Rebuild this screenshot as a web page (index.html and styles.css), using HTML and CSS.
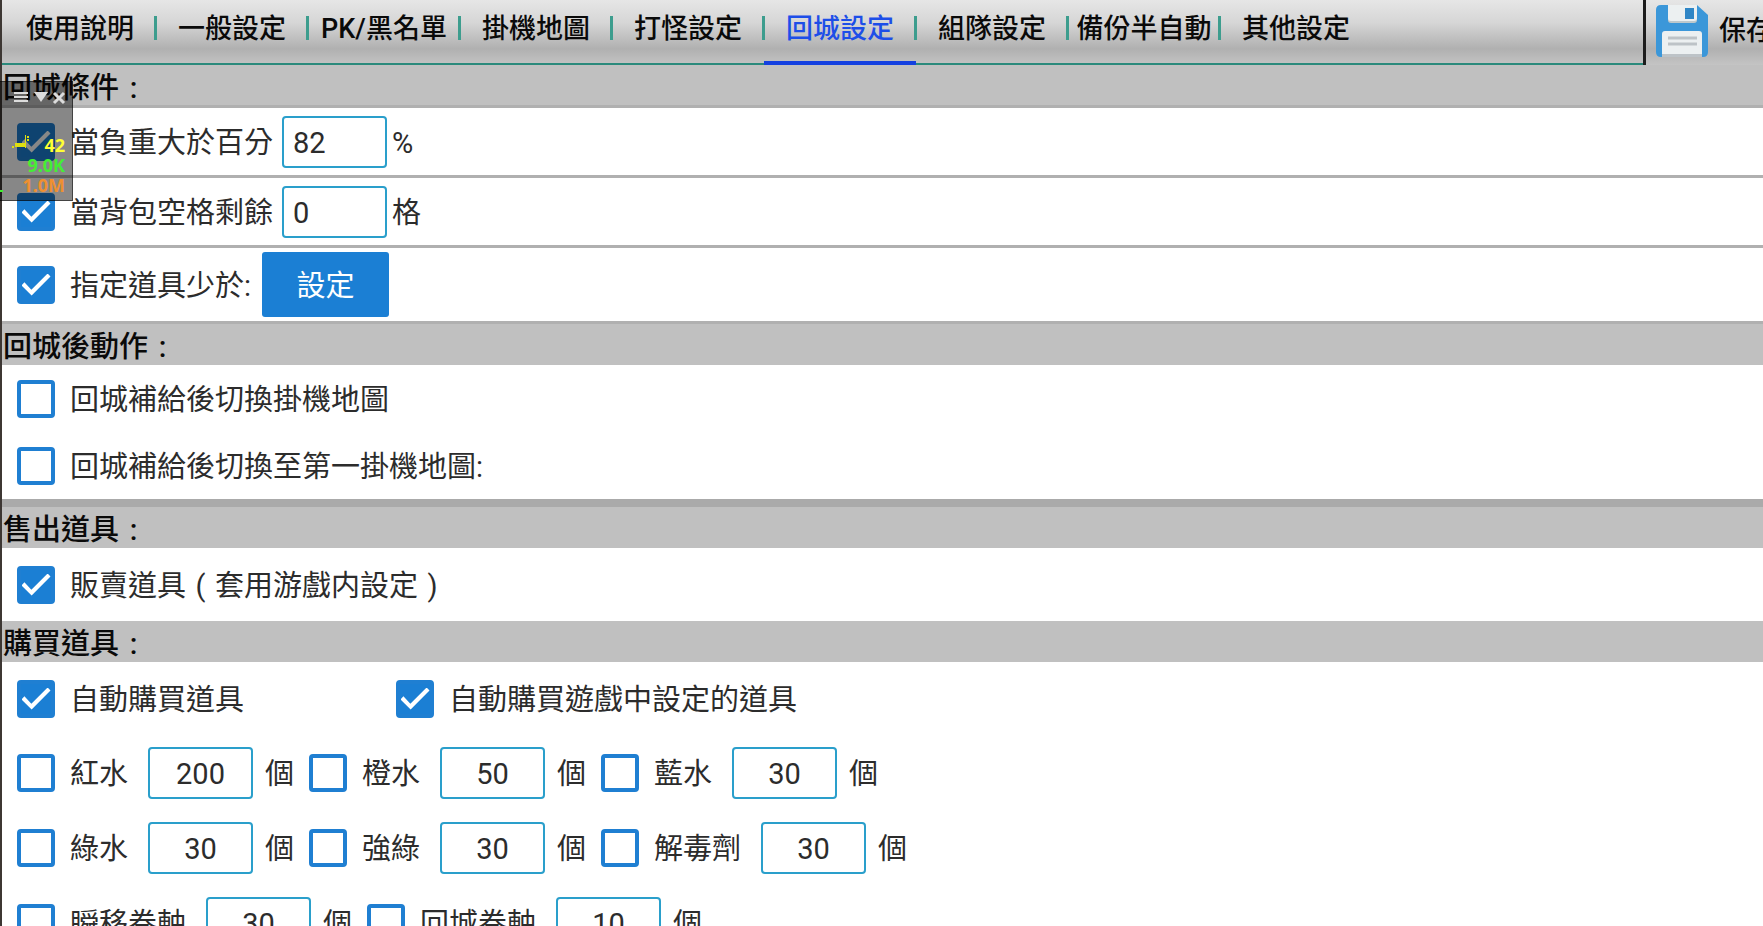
FILE: index.html
```html
<!DOCTYPE html>
<html lang="zh-Hant">
<head>
<meta charset="utf-8">
<title>回城設定</title>
<link rel="stylesheet" href="styles.css">
</head>
<body>
<div class="app">
  <header class="topbar">
    <nav class="tabs">
      <a class="tab" href="#help">使用說明</a>
      <a class="tab" href="#general">一般設定</a>
      <a class="tab" href="#pk">PK/黑名單</a>
      <a class="tab" href="#map">掛機地圖</a>
      <a class="tab" href="#fight">打怪設定</a>
      <a class="tab active" href="#town" aria-current="page">回城設定</a>
      <a class="tab" href="#team">組隊設定</a>
      <a class="tab" href="#backup">備份半自動</a>
      <a class="tab" href="#other">其他設定</a>
    </nav>
    <button class="save" type="button">
      <svg class="save-icon" viewBox="0 0 52 52" aria-hidden="true">
        <path d="M5 0H41L52 10V47Q52 52 47 52H5Q0 52 0 47V5Q0 0 5 0Z" fill="#3b97d9"/>
        <path d="M12 0H41V15Q41 18 38 18H15Q12 18 12 15Z" fill="#bdc8cc"/>
        <path d="M12 0H41V13Q41 16 38 16H15Q12 16 12 13Z" fill="#ecf0f1"/>
        <rect x="29" y="3" width="9" height="11" fill="#2f86c6"/>
        <path d="M6 52V29Q6 26 9 26H43Q46 26 46 29V52Z" fill="#ecf0f1"/>
        <rect x="6" y="49" width="40" height="3" fill="#bdc3c7"/>
        <path d="M12 33H41M12 39H41" stroke="#bdc3c7" stroke-width="3"/>
      </svg>
      <span>保存</span>
    </button>
  </header>

  <main>
    <h2 class="heading ruled">回城條件<span class="wide">:</span></h2>
    <div class="row ruled">
      <input class="check" type="checkbox" id="weight" checked>
      <label for="weight">當負重大於百分</label>
      <input class="field start" type="text" value="82" aria-label="負重百分比">
      <span class="suffix">%</span>
    </div>
    <div class="row ruled">
      <input class="check" type="checkbox" id="bag" checked>
      <label for="bag">當背包空格剩餘</label>
      <input class="field start" type="text" value="0" aria-label="背包空格">
      <span class="suffix">格</span>
    </div>
    <div class="row tall ruled">
      <input class="check" type="checkbox" id="items" checked>
      <label for="items">指定道具少於:</label>
      <button class="set" type="button">設定</button>
    </div>

    <h2 class="heading">回城後動作<span class="wide">:</span></h2>
    <div class="stack">
      <div class="row">
        <input class="check" type="checkbox" id="switch">
        <label for="switch">回城補給後切換掛機地圖</label>
      </div>
      <div class="row">
        <input class="check" type="checkbox" id="first">
        <label for="first">回城補給後切換至第一掛機地圖:</label>
      </div>
    </div>

    <h2 class="heading">售出道具<span class="wide">:</span></h2>
    <div class="row tall">
      <input class="check" type="checkbox" id="sell" checked>
      <label for="sell">販賣道具<span class="wide">(</span>套用游戲内設定<span class="wide">)</span></label>
    </div>

    <h2 class="heading">購買道具<span class="wide">:</span></h2>
    <div class="row buy-options">
      <div class="option">
        <input class="check" type="checkbox" id="auto" checked>
        <label for="auto">自動購買道具</label>
      </div>
      <div class="option">
        <input class="check" type="checkbox" id="autogame" checked>
        <label for="autogame">自動購買遊戲中設定的道具</label>
      </div>
    </div>
    <div class="row buy">
      <div class="item">
        <input class="check" type="checkbox" id="red"><label for="red">紅水</label>
        <input class="field" type="text" value="200" aria-label="紅水數量"><span>個</span>
      </div>
      <div class="item">
        <input class="check" type="checkbox" id="orange"><label for="orange">橙水</label>
        <input class="field" type="text" value="50" aria-label="橙水數量"><span>個</span>
      </div>
      <div class="item">
        <input class="check" type="checkbox" id="blue"><label for="blue">藍水</label>
        <input class="field" type="text" value="30" aria-label="藍水數量"><span>個</span>
      </div>
    </div>
    <div class="row buy">
      <div class="item">
        <input class="check" type="checkbox" id="green"><label for="green">綠水</label>
        <input class="field" type="text" value="30" aria-label="綠水數量"><span>個</span>
      </div>
      <div class="item">
        <input class="check" type="checkbox" id="strong"><label for="strong">強綠</label>
        <input class="field" type="text" value="30" aria-label="強綠數量"><span>個</span>
      </div>
      <div class="item">
        <input class="check" type="checkbox" id="antidote"><label for="antidote">解毒劑</label>
        <input class="field" type="text" value="30" aria-label="解毒劑數量"><span>個</span>
      </div>
    </div>
    <div class="row buy">
      <div class="item">
        <input class="check" type="checkbox" id="teleport"><label for="teleport">瞬移卷軸</label>
        <input class="field" type="text" value="30" aria-label="瞬移卷軸數量"><span>個</span>
      </div>
      <div class="item">
        <input class="check" type="checkbox" id="return"><label for="return">回城卷軸</label>
        <input class="field" type="text" value="10" aria-label="回城卷軸數量"><span>個</span>
      </div>
    </div>
  </main>
</div>

<aside class="monitor">
  <svg class="monitor-icons" viewBox="0 0 72 24" aria-hidden="true">
    <path d="M14 11H28M14 15H28M14 19H28" stroke="#dcdcdc" stroke-width="2"/>
    <path d="M34 10H48L41 20Z" fill="#dcdcdc"/>
    <path d="M54 11L64 21M64 11L54 21" stroke="#dcdcdc" stroke-width="3"/>
  </svg>
  <div class="stat fps">
    <svg class="spark" viewBox="0 0 18 14" aria-hidden="true">
      <path d="M0 11H2V13H0ZM3 8H13V12H3ZM13 0H14V13H13ZM15 1H17V3H15ZM15 4H17V6H15Z" fill="#dede10"/>
    </svg>
    <span>42</span>
  </div>
  <div class="stat down">9.0K</div>
  <div class="stat up">1.0M</div>
  <div class="trace"></div>
</aside>
</body>
</html>
```
FILE: styles.css
```css
* {
  box-sizing: border-box;
}

body {
  margin: 0;
  height: 100vh;
  overflow: hidden;
  background: #fff;
  color: #2c2c2c;
  font: 29px/40px Roboto, "Noto Sans CJK TC", sans-serif;
}

.app {
  min-height: 100vh;
  border-left: 2px solid #3d3733;
}

.topbar {
  display: flex;
  height: 65px;
  background: linear-gradient(#e6e6e6 0, #d6d6d6 35%, #b0b0b0 75%, #c4c4c4 100%);
}

.tabs {
  display: flex;
  flex: 1;
  min-width: 0;
  padding-left: 2px;
  border-bottom: 2px solid #2b8a7c;
}

.tab {
  position: relative;
  flex: 0 0 152px;
  height: 65px;
  padding-top: 9px;
  border-bottom: 4px solid transparent;
  color: #0a0a0a;
  font-size: 27px;
  font-weight: 500;
  text-align: center;
  text-decoration: none;
  white-space: nowrap;
}

.tab + .tab::before {
  content: "";
  position: absolute;
  top: 16px;
  left: -2px;
  width: 3px;
  height: 24px;
  background: #3d9d8e;
}

.active {
  border-bottom-color: #1440e0;
  color: #1d4ee8;
}

.save {
  display: flex;
  flex: 0 0 120px;
  gap: 11px;
  overflow: hidden;
  padding: 5px 0 0 10px;
  border: 0;
  border-left: 3px solid #1c1c1c;
  background: none;
  color: #0a0a0a;
  font: inherit;
  font-size: 27px;
  font-weight: 500;
  white-space: nowrap;
}

.save-icon {
  flex: none;
  width: 52px;
  height: 52px;
}

.save span {
  padding-top: 6px;
}

.heading {
  margin: 0;
  height: 41px;
  padding: 3px 0 0 1px;
  background: #c0c0c0;
  color: #0a0a0a;
  font-size: 29px;
  font-weight: 500;
  line-height: 41px;
}

.wide {
  display: inline-block;
  width: 1em;
  text-align: center;
}

.row {
  display: flex;
  align-items: center;
  height: 67px;
  padding-left: 15px;
}

.row label,
.row .suffix,
.item span {
  padding-top: 3px;
}

.ruled {
  height: 70px;
  border-bottom: 3px solid #b0b0b0;
}

.heading.ruled {
  height: 43px;
}

.tall {
  height: 73px;
}

.tall.ruled {
  height: 76px;
}

.check {
  flex: none;
  appearance: none;
  width: 38px;
  height: 38px;
  margin: 0 15px 0 0;
  border: 4px solid #1f7fd2;
  border-radius: 4px;
  background: #fff;
}

.check:checked {
  display: grid;
  place-items: center;
  background: #1b7fd4;
}

.check:checked::before {
  content: "";
  width: 29px;
  height: 22px;
  background: #fff;
  clip-path: polygon(0 54%, 10% 40%, 34% 74%, 90% 0, 100% 14%, 35% 100%);
}

.field {
  flex: none;
  width: 105px;
  height: 52px;
  margin: 0 12px 0 20px;
  padding: 2px 0 0;
  border: 2px solid #2a9fcb;
  border-radius: 4px;
  background: #fff;
  color: #2c2c2c;
  font: inherit;
  text-align: center;
}

.start {
  margin: 0 5px 0 9px;
  padding-left: 9px;
  text-align: left;
}

.set {
  width: 127px;
  height: 65px;
  margin-left: 11px;
  padding-top: 4px;
  border: 0;
  border-radius: 3px;
  background: #1b7fd4;
  color: #fff;
  font: inherit;
}

.stack {
  border-bottom: 8px solid #aaa;
}

.buy-options {
  height: 73px;
}

.option {
  display: flex;
  flex: 0 0 379px;
  align-items: center;
  white-space: nowrap;
}

.buy {
  gap: 15px;
  height: 75px;
}

.item {
  display: flex;
  align-items: center;
}

.monitor {
  position: absolute;
  top: 81px;
  left: 0;
  width: 73px;
  height: 120px;
  border: 1px solid rgba(0, 0, 0, 0.5);
  border-left: 0;
  background: rgba(0, 0, 0, 0.47);
  font: bold 18px/20px "Noto Sans", sans-serif;
}

.monitor-icons {
  display: block;
  width: 72px;
  height: 24px;
  margin-bottom: 29px;
}

.stat {
  display: flex;
  justify-content: flex-end;
  height: 20px;
  padding-right: 7px;
}

.fps {
  gap: 14px;
  color: #ff3;
}

.spark {
  width: 18px;
  height: 14px;
}

.down {
  color: #4e3;
}

.up {
  color: #f09030;
}

.trace {
  position: absolute;
  top: 108px;
  left: 0;
  width: 3px;
  height: 2px;
  background: #4e3;
}
```
